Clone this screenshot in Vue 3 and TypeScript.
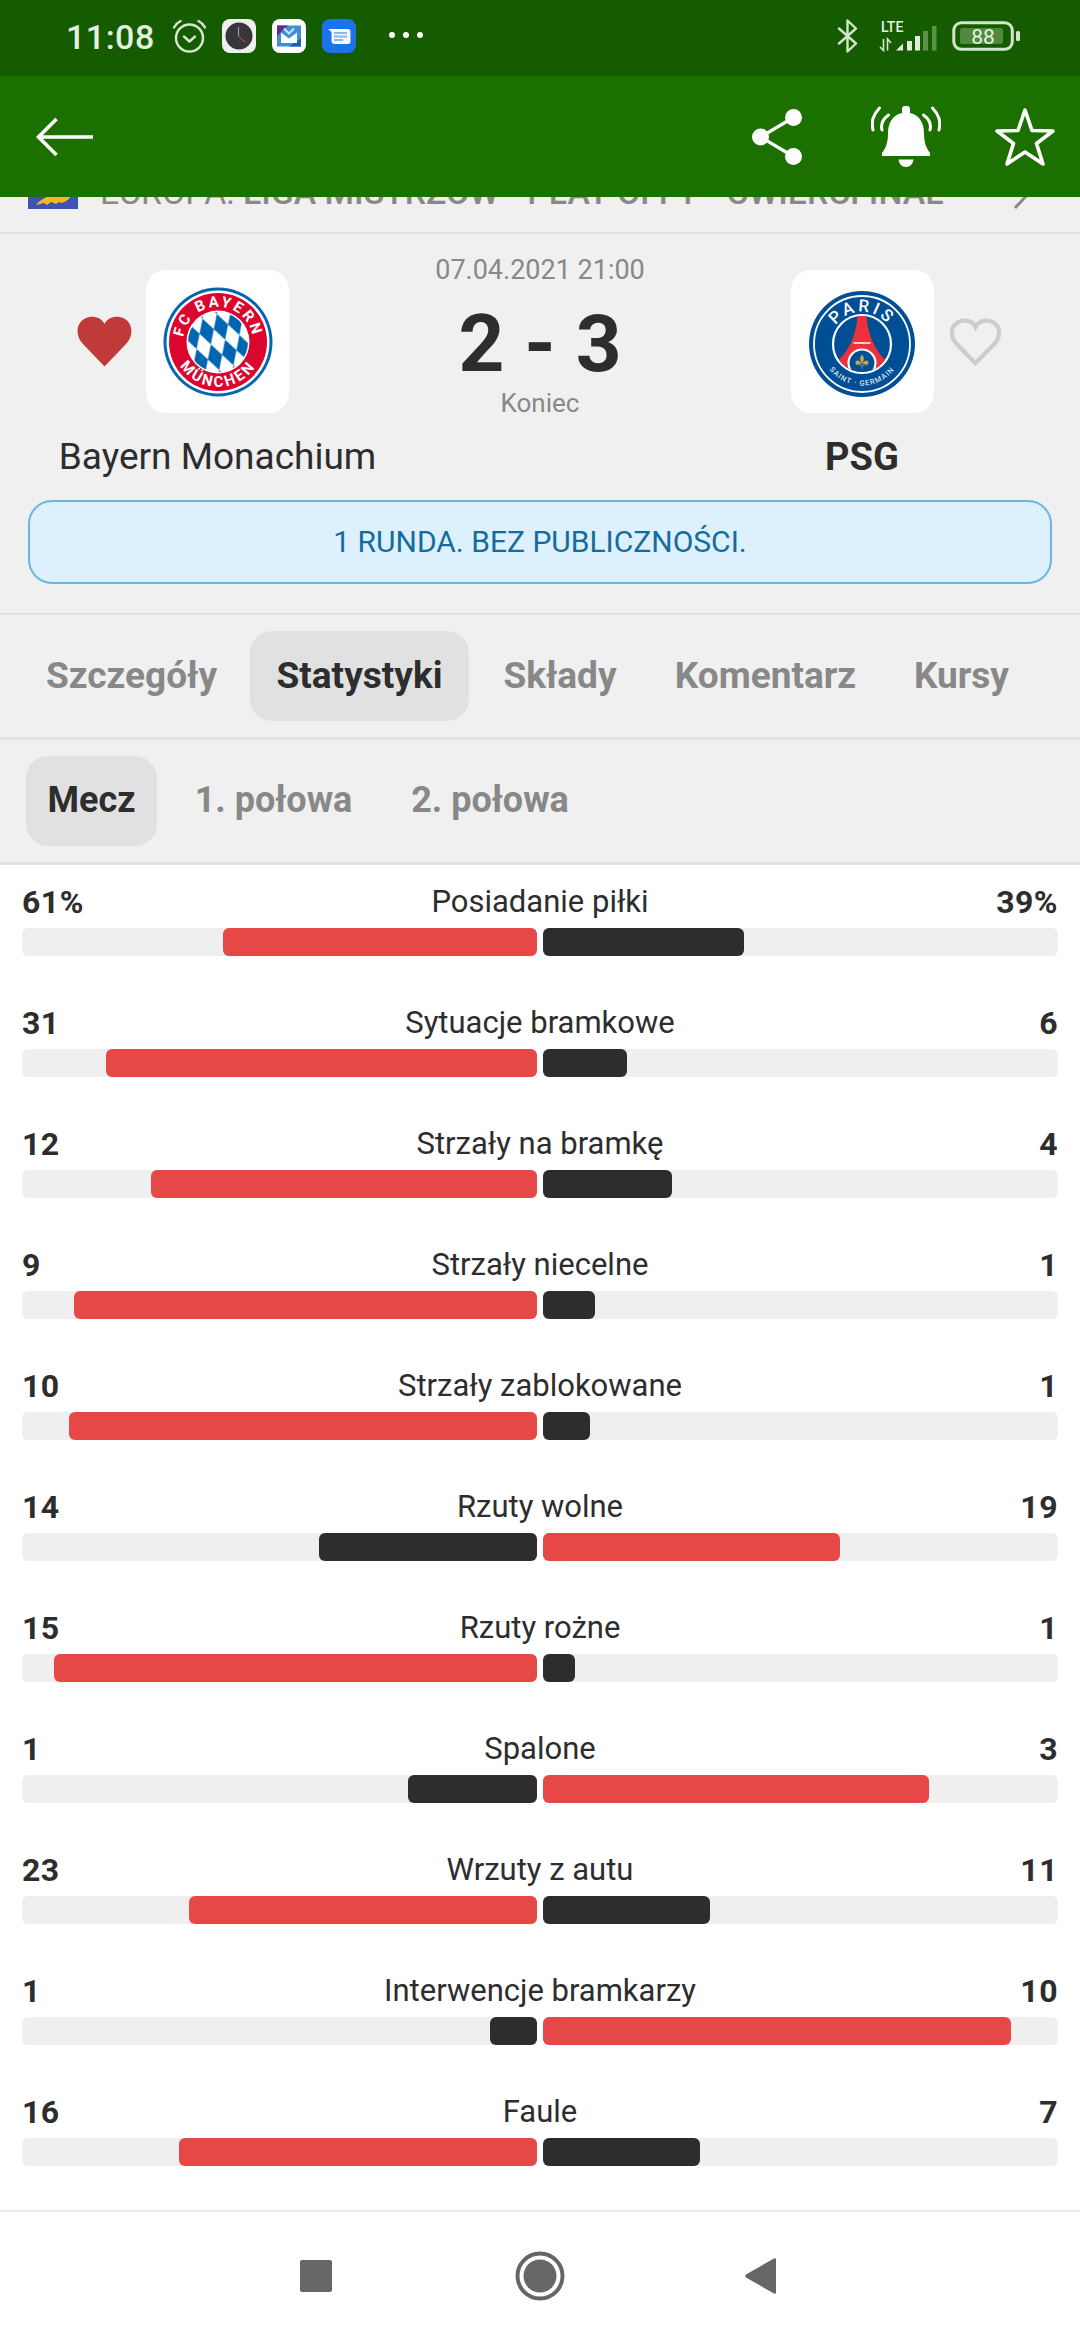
<template>
  <div class="screen">
    <div class="statusbar">
      <span class="clock">11:08</span>
      <svg class="st-alarm" width="35" height="34" viewBox="0 0 35 34" fill="none" stroke="#d6e6d0" stroke-width="2.4" stroke-linecap="round" stroke-linejoin="round">
        <circle cx="17.5" cy="19" r="13.5" />
        <path d="M12 17.5l5.5 5 5.5-5" />
        <path d="M2 8.5C3.5 5.5 5.5 3.500 8.500 2M33 8.500C31.500 5.500 29.500 3.500 26.500 2" />
      </svg>
      <svg class="st-app" width="34" height="34" viewBox="0 0 34 34">
        <rect width="34" height="34" rx="8" fill="#efefef" />
        <circle cx="17" cy="17" r="13.500" fill="#37373b" />
        <path d="M16.500 8v9" stroke="#9a9a9a" stroke-width="1.200" />
        <path d="M16.500 17l7 6.500" stroke="#d9534f" stroke-width="1" />
      </svg>
      <svg class="st-app" width="34" height="34" viewBox="0 0 34 34">
        <rect width="34" height="34" rx="8" fill="#fff" />
        <rect x="5" y="6.500" width="24" height="21" fill="#3f8fd6" />
        <path d="M5 6.500h11L5 17z" fill="#5b2f8c" />
        <path d="M29 27.500H17l12-8z" fill="#1d5fae" />
        <path d="M9 13.500l8 6 8-6v10.500H9z" fill="#fff" />
        <path d="M12 9.500l5 5 5-5" fill="none" stroke="#cfe5f7" stroke-width="2" />
      </svg>
      <svg class="st-app" width="34" height="34" viewBox="0 0 34 34">
        <rect width="34" height="34" rx="8" fill="#1a73e8" />
        <path d="M6 10h20a2.500 2.500 0 0 1 2.500 2.500v10a2.500 2.500 0 0 1-2.500 2.500H12.500a3 3 0 0 1-3-3V13z" fill="#f3f7fe" />
        <path d="M12 14h13M12 17.500h13M12 21h9" stroke="#8ab4f4" stroke-width="1.800" />
      </svg>
      <div class="st-dots"><i></i><i></i><i></i></div>
      <div class="st-spacer"></div>
      <svg class="st-bt" width="22" height="34" viewBox="0 0 22 34" fill="none" stroke="#d3e5cd" stroke-width="2.400" stroke-linejoin="round" stroke-linecap="round">
        <path d="M2 9.500l17 15-8.500 8V1.500l8.500 8-17 15" />
      </svg>
      <svg class="st-signal" width="58" height="32" viewBox="0 0 58 32">
        <text x="2" y="11.500" class="lte">LTE</text>
        <path d="M4.500 19v11.500L1 27M8.500 30.500V19l3.500 4" fill="none" stroke="#d3e5cd" stroke-width="1.600" />
        <path d="M17 30.500l7-7v7z" fill="#e2eedd" />
        <path d="M28 21h5v9.500h-5zM36 16h5v14.500h-5z" fill="#e2eedd" />
        <path d="M44 11h5v19.500h-5zM53 6h4.500v24.500H53z" fill="#5b9148" />
      </svg>
      <svg class="st-battery" width="68" height="30" viewBox="0 0 68 30">
        <rect x="1.800" y="1.800" width="58.500" height="26.500" rx="7.500" fill="none" stroke="#d3e5cd" stroke-width="3" />
        <rect x="8" y="7" width="43" height="16" rx="2.500" fill="#51893e" />
        <text x="31" y="22.500" class="batt">88</text>
        <rect x="64" y="10" width="4" height="10" rx="1.500" fill="#d3e5cd" />
      </svg>
    </div>

    <div class="toolbar">
      <svg width="58" height="40" viewBox="0 0 58 40" fill="none" stroke="#fff" stroke-width="3.600">
        <path d="M57 20H3M20.500 2L2.500 20l18 18" />
      </svg>
      <div class="tb-spacer"></div>
      <svg class="tb-share" width="50" height="56" viewBox="0 0 50 56" fill="#fff">
        <circle cx="8.500" cy="28" r="8.500" />
        <circle cx="41.500" cy="8.500" r="8.500" />
        <circle cx="41.500" cy="47.500" r="8.500" />
        <path d="M41.500 8.500L8.500 28l33 19.500" fill="none" stroke="#fff" stroke-width="3.400" />
      </svg>
      <svg class="tb-bell" width="70" height="62" viewBox="0 0 70 62" fill="#fff">
        <path d="M31 3.500a4 4 0 0 1 8 0V7C49 9 53 18 53 27c0 9 2 15 6 20v3H11v-3c4-5 6-11 6-20 0-9 4-18 14-20z" />
        <path d="M27.500 53.500h15c-.5 4.500-3.500 7.500-7.500 7.500s-7-3-7.500-7.500z" />
        <path d="M8.500 2C2 9 0 15 2 24M17.500 9C12 13 9.500 18 11 24M61.500 2C68 9 70 15 68 24M52.500 9C58 13 60.500 18 59 24" fill="none" stroke="#fff" stroke-width="3" stroke-linecap="round" />
      </svg>
      <svg class="tb-star" width="60" height="60" viewBox="0 0 60 60" fill="none" stroke="#fff" stroke-width="3.600" stroke-linejoin="round">
        <path d="M30 3l7 20.500 21 .5-16.500 12.500L48 57 30 45 12 57l6.500-20.500L2 24l21-.5z" />
      </svg>
    </div>

    <div class="competition">
      <div class="competition-row">
        <svg class="flag" width="50" height="34" viewBox="0 0 50 34">
          <rect width="50" height="34" fill="#3f51b5" />
          <path d="M8 30c4-6 10-6 14-11 5 3 8 0 12 2 4-1 7 0 9-1-2 6-6 6-9 8l-3-1-3 2-5-2-4 3-3-2z" fill="#f5b91f" />
        </svg>
        <span class="competition-name">EUROPA: <b>LIGA MISTRZÓW - PLAY OFFY - ĆWIERĆFINAŁ</b></span>
        <svg class="chevron" width="20" height="36" viewBox="0 0 20 36" fill="none" stroke="#888" stroke-width="3">
          <path d="M3 2l15 16L3 34" />
        </svg>
      </div>
    </div>

    <div class="match">
      <div class="match-grid">
        <div class="team team-home">
          <div class="logo-row">
            <svg class="heart" width="55" height="51" viewBox="0 0 55 51">
              <path d="M27.500 50.500L6 28C-2 20-1 7 8 2.500 15-1 24 1 27.500 8 31 1 40-1 47 2.500 56 7 57 20 49 28z" fill="#bf3a38" />
            </svg>
            <div class="logo">
              <svg width="110" height="110" viewBox="-55 -55 110 110">
                <defs>
                  <pattern id="rauten" width="15" height="27" patternUnits="userSpaceOnUse" patternTransform="rotate(-18)">
                    <rect width="15" height="27" fill="#fff" />
                    <path d="M7.500 0L15 13.500 7.500 27 0 13.500z" fill="#0066b2" />
                  </pattern>
                  <path id="bayern-top" d="M-32 14A35 35 0 1 1 32 14" />
                  <path id="bayern-bottom" d="M-43 13A45 45 0 0 0 43 13" />
                </defs>
                <circle r="54.500" fill="#0066b2" />
                <circle r="51.500" fill="#fff" />
                <circle r="49" fill="#dc052d" />
                <circle r="31.500" fill="#fff" />
                <circle r="30" fill="url(#rauten)" />
                <text class="crest-text"><textPath href="#bayern-top" startOffset="50%" text-anchor="middle">FC BAYERN</textPath></text>
                <text class="crest-text"><textPath href="#bayern-bottom" startOffset="50%" text-anchor="middle">MÜNCHEN</textPath></text>
              </svg>
            </div>
            <span></span>
          </div>
          <div class="team-name">Bayern Monachium</div>
        </div>

        <div class="score-col">
          <div class="date">07.04.2021 21:00</div>
          <div class="score">2 - 3</div>
          <div class="state">Koniec</div>
        </div>

        <div class="team team-away">
          <div class="logo-row">
            <span></span>
            <div class="logo">
              <svg width="110" height="110" viewBox="-55 -57 110 110">
                <defs>
                  <clipPath id="psg-inner"><circle r="28" /></clipPath>
                  <path id="psg-top" d="M-30 12A32.300 32.300 0 1 1 30 12" />
                  <path id="psg-bottom" d="M-38 16A41 41 0 0 0 38 16" />
                </defs>
                <circle r="53" fill="#004f96" />
                <circle r="48" fill="none" stroke="#fff" stroke-width="1.800" />
                <circle r="29" fill="#004f96" stroke="#fff" stroke-width="2.200" />
                <g clip-path="url(#psg-inner)">
                  <path d="M-4.500-30H4.500C5-10 13 6 24 17L15 25H-15L-24 17C-13 6-5-10-4.500-30z" fill="#ee2f3c" />
                  <path d="M-8.500-1H8.500" stroke="#fff" stroke-width="1.500" />
                  <circle cy="19" r="13.500" fill="#004f96" stroke="#fff" stroke-width="2.200" />
                  <path d="M0 11c2 3 2 5 0 8-2-3-2-5 0-8zM-1 20c-1-4-6-4-5-1 0 2 2 2 2.500 1M1 20c1-4 6-4 5-1 0 2-2 2-2.500 1M-3.500 21h7M0 21v4" fill="#c9a94f" stroke="#c9a94f" stroke-width=".7" />
                </g>
                <text class="crest-paris"><textPath href="#psg-top" startOffset="50%" text-anchor="middle">PARIS</textPath></text>
                <text class="crest-saint"><textPath href="#psg-bottom" startOffset="50%" text-anchor="middle">SAINT · GERMAIN</textPath></text>
              </svg>
            </div>
            <svg class="heart heart-away" width="55" height="51" viewBox="-2 -2 59 55">
              <path d="M27.500 49L7 28C0 20 0 9 9 4.500 15.500 1.500 24 3 27.500 10 31 3 39.500 1.500 46 4.500 55 9 55 20 48 28z" fill="none" stroke="#ccc" stroke-width="4.500" />
            </svg>
          </div>
          <div class="team-name team-name-bold">PSG</div>
        </div>
      </div>
      <div class="banner">1 RUNDA. BEZ PUBLICZNOŚCI.</div>
    </div>

    <div class="tabs">
      <div v-for="tab in tabs" :key="tab" class="tab" :class="{ active: tab === 'Statystyki' }">{{ tab }}</div>
    </div>

    <div class="tabs tabs-sub">
      <div v-for="tab in periods" :key="tab" class="tab" :class="{ active: tab === 'Mecz' }">{{ tab }}</div>
    </div>

    <div class="stats">
      <div v-for="stat in rows" :key="stat.label" class="stat">
        <div class="stat-head">
          <b>{{ stat.home }}{{ stat.suffix }}</b>
          <span>{{ stat.label }}</span>
          <b class="right">{{ stat.away }}{{ stat.suffix }}</b>
        </div>
        <div class="stat-bar">
          <div class="half half-home">
            <div class="fill" :class="stat.homeClass" :style="{ width: stat.homeWidth }"></div>
          </div>
          <div class="half">
            <div class="fill" :class="stat.awayClass" :style="{ width: stat.awayWidth }"></div>
          </div>
        </div>
      </div>
    </div>

    <div class="navbar">
      <div class="nav-square"></div>
      <svg class="nav-home" width="50" height="50" viewBox="0 0 50 50">
        <circle cx="25" cy="25" r="22.500" fill="none" stroke="#666" stroke-width="4" />
        <circle cx="25" cy="25" r="16.500" fill="#666" />
      </svg>
      <svg class="nav-back" width="31" height="38" viewBox="0 0 31 38">
        <path d="M29 1.500q2-1 2 1v33q0 2-2 1L1 20.500q-1.500-1.500 0-3z" fill="#666" />
      </svg>
    </div>
  </div>
</template>

<script setup lang="ts">
import { computed } from 'vue'

interface Stat {
  label: string
  home: number
  away: number
  suffix?: string
}

const tabs = ['Szczegóły', 'Statystyki', 'Składy', 'Komentarz', 'Kursy']
const periods = ['Mecz', '1. połowa', '2. połowa']

const stats: Stat[] = [
  { label: 'Posiadanie piłki', home: 61, away: 39, suffix: '%' },
  { label: 'Sytuacje bramkowe', home: 31, away: 6 },
  { label: 'Strzały na bramkę', home: 12, away: 4 },
  { label: 'Strzały niecelne', home: 9, away: 1 },
  { label: 'Strzały zablokowane', home: 10, away: 1 },
  { label: 'Rzuty wolne', home: 14, away: 19 },
  { label: 'Rzuty rożne', home: 15, away: 1 },
  { label: 'Spalone', home: 1, away: 3 },
  { label: 'Wrzuty z autu', home: 23, away: 11 },
  { label: 'Interwencje bramkarzy', home: 1, away: 10 },
  { label: 'Faule', home: 16, away: 7 }
]

const rows = computed(() =>
  stats.map((stat) => {
    const total = stat.home + stat.away
    return {
      ...stat,
      homeWidth: `${(stat.home / total) * 100}%`,
      awayWidth: `${(stat.away / total) * 100}%`,
      homeClass: stat.home >= stat.away ? 'red' : 'dark',
      awayClass: stat.away > stat.home ? 'red' : 'dark'
    }
  })
)
</script>

<style>
html,
body {
  margin: 0;
  background: #fff;
}
</style>

<style scoped>
.screen {
  width: 1080px;
  height: 2340px;
  display: flex;
  flex-direction: column;
  overflow: hidden;
  background: #fff;
  font-family: Roboto, "Liberation Sans", sans-serif;
  color: #2d2d2d;
}

/* status bar */
.statusbar {
  height: 76px;
  flex: none;
  display: flex;
  align-items: center;
  padding: 0 60px 0 66px;
  box-sizing: border-box;
  background: #155c00;
}

.clock {
  font-size: 34px;
  font-weight: 500;
  letter-spacing: .5px;
  color: #e4efe0;
  width: 106px;
  margin-top: -2px;
}

.st-alarm {
  margin-top: -4px;
  margin-right: 15px;
}

.st-app {
  margin-top: -4px;
  margin-right: 16px;
}

.st-dots {
  display: flex;
  gap: 8px;
  margin: -6px 0 0 17px;
}

.st-dots i {
  width: 6px;
  height: 6px;
  border-radius: 50%;
  background: #fff;
}

.st-spacer {
  flex: 1;
}

.st-bt {
  margin-top: -4px;
  margin-right: 20px;
}

.st-signal {
  margin-top: -5px;
  margin-right: 15px;
}

.lte {
  font-size: 14px;
  font-weight: 500;
  fill: #e8f2e4;
}

.st-battery {
  margin-top: -4px;
}

.batt {
  font-size: 21px;
  fill: #e8f2e4;
  text-anchor: middle;
}

/* toolbar */
.toolbar {
  height: 121px;
  flex: none;
  display: flex;
  align-items: center;
  padding: 0 25px 0 36px;
  box-sizing: border-box;
  background: #1c7000;
}

.tb-spacer {
  flex: 1;
}

.tb-bell {
  margin-left: 69px;
}

.tb-star {
  margin-left: 54px;
}

/* competition strip, scrolled under the toolbar */
.competition {
  height: 35px;
  flex: none;
  overflow: hidden;
  background: #f0f0f0;
}

.competition-row {
  height: 36px;
  margin-top: -23px;
  display: flex;
  align-items: center;
  padding: 0 48px 0 28px;
}

.flag {
  flex: none;
}

.competition-name {
  flex: 1;
  margin-left: 22px;
  font-size: 33.800px;
  color: #888;
  white-space: nowrap;
}

.competition-name b {
  font-weight: 500;
}

/* match header */
.match {
  flex: none;
  height: 381px;
  box-sizing: border-box;
  border-top: 2px solid #e2e2e2;
  background: #f0f0f0;
  padding-top: 36px;
}

.match-grid {
  display: grid;
  grid-template-columns: 432px 216px 432px;
}

.team-home {
  padding-left: 3px;
}

.team-away {
  padding-right: 4px;
}

.logo-row {
  display: grid;
  grid-template-columns: 1fr 143px 1fr;
  gap: 14px;
  align-items: center;
}

.logo {
  width: 143px;
  height: 143px;
  border-radius: 20px;
  background: #fff;
  display: flex;
  align-items: center;
  justify-content: center;
}

.heart {
  justify-self: end;
}

.heart-away {
  justify-self: start;
}

.crest-text {
  font-size: 15px;
  font-weight: 700;
  letter-spacing: 2.500px;
  fill: #fff;
}

.crest-paris {
  font-size: 17px;
  font-weight: 500;
  letter-spacing: 3px;
  fill: #fff;
}

.crest-saint {
  font-size: 7.500px;
  font-weight: 500;
  letter-spacing: 1px;
  fill: #d7e4ef;
}

.team-name {
  margin-top: 22px;
  height: 44px;
  line-height: 44px;
  font-size: 37px;
  text-align: center;
  white-space: nowrap;
}

.team-name-bold {
  font-size: 38px;
  font-weight: 700;
}

.score-col {
  margin-top: -18px;
  text-align: center;
}

.date {
  height: 36px;
  line-height: 36px;
  font-size: 27px;
  color: #888;
  white-space: nowrap;
}

.score {
  margin-top: 16px;
  height: 80px;
  line-height: 80px;
  font-size: 80px;
  font-weight: 700;
  white-space: nowrap;
}

.state {
  margin-top: 4px;
  height: 30px;
  line-height: 30px;
  font-size: 26px;
  color: #888;
}

.banner {
  margin: 21px 28px 0;
  height: 84px;
  box-sizing: border-box;
  border: 2px solid #6db5e3;
  border-radius: 24px;
  background: #ddf0fd;
  color: #146c9e;
  font-size: 30px;
  line-height: 80px;
  text-align: center;
}

/* tabs */
.tabs {
  flex: none;
  height: 124px;
  box-sizing: border-box;
  display: grid;
  grid-template-columns: 213px 219px 158px 229px 139px;
  justify-content: start;
  column-gap: 12px;
  padding: 16px 0 16px 25px;
  border-top: 2px solid #e2e2e2;
  background: #f0f0f0;
}

.tabs-sub {
  height: 128px;
  grid-template-columns: 131px 209px 200px;
  padding-left: 26px;
  border-bottom: 3px solid #e2e2e2;
  border-top-width: 3px;
}

.tab {
  border-radius: 22px;
  font-size: 37px;
  font-weight: 700;
  line-height: 89px;
  color: #888;
  text-align: center;
  white-space: nowrap;
}

.tabs-sub .tab {
  font-size: 36px;
}

.tab.active {
  background: #e1e1e1;
  color: #2d2d2d;
}

/* stats */
.stats {
  flex: 1;
  display: flex;
  flex-direction: column;
  gap: 47px;
  padding: 17px 22px 0;
}

.stat-head {
  height: 40px;
  margin-bottom: 6px;
  display: grid;
  grid-template-columns: 1fr auto 1fr;
  align-items: center;
  font-size: 31px;
  line-height: 40px;
}

.stat-head b {
  font-size: 32px;
  letter-spacing: .5px;
  font-weight: 700;
}

.stat-head .right {
  text-align: right;
}

.stat-bar {
  display: flex;
  gap: 6px;
  height: 28px;
}

.half {
  flex: 1;
  display: flex;
  border-radius: 6px;
  background: #efefef;
}

.half-home {
  justify-content: flex-end;
}

.fill {
  border-radius: 6px;
}

.fill.red {
  background: #e64848;
}

.fill.dark {
  background: #2d2d2d;
}

/* android nav bar */
.navbar {
  flex: none;
  height: 130px;
  box-sizing: border-box;
  border-top: 2px solid #ebebeb;
  display: flex;
  align-items: center;
  padding-left: 300px;
}

.nav-square {
  width: 32px;
  height: 32px;
  border-radius: 2px;
  background: #666;
}

.nav-home {
  margin-left: 183px;
}

.nav-back {
  margin-left: 180px;
}
</style>
